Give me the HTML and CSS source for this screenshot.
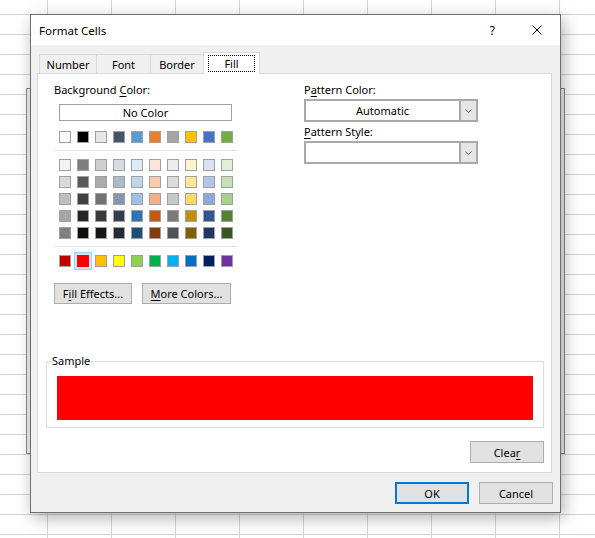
FILE: index.html
```html
<!DOCTYPE html>
<html lang="en">
<head>
<meta charset="utf-8">
<title>Format Cells</title>
<link rel="stylesheet" href="styles.css">
</head>
<body>
<div class="back-window"></div>
<div class="dialog">
  <div class="titlebar">
    <span class="title">Format Cells</span>
    <div class="title-controls">
      <span class="help">?</span>
      <svg class="close" width="10" height="10" viewBox="0 0 10 10"><path d="M0.5 0.5L9.5 9.5M9.5 0.5L0.5 9.5" stroke="#000" stroke-width="1" fill="none"/></svg>
    </div>
  </div>
  <div class="dialog-body">
    <div class="tabs">
      <div class="tab tab-number">Number</div>
      <div class="tab tab-font">Font</div>
      <div class="tab tab-border">Border</div>
      <div class="tab tab-fill active"><span class="focus">Fill</span></div>
    </div>
    <div class="panel">
      <div class="top">
        <div class="bg-col">
          <div class="label">Background <u>C</u>olor:</div>
          <div class="nocolor">No Color</div>
          <div class="swatch-row first-row">
            <span class="sw" style="background:#FFFFFF"></span><span class="sw" style="background:#000000"></span><span class="sw" style="background:#E7E6E6"></span><span class="sw" style="background:#44546A"></span><span class="sw" style="background:#5B9BD5"></span><span class="sw" style="background:#ED7D31"></span><span class="sw" style="background:#A5A5A5"></span><span class="sw" style="background:#FFC000"></span><span class="sw" style="background:#4472C4"></span><span class="sw" style="background:#70AD47"></span>
          </div>
          <div class="sep"></div>
          <div class="tints">
            <div class="swatch-row">
              <span class="sw" style="background:#F2F2F2"></span><span class="sw" style="background:#7F7F7F"></span><span class="sw" style="background:#D0CECE"></span><span class="sw" style="background:#D6DCE4"></span><span class="sw" style="background:#DDEBF7"></span><span class="sw" style="background:#FCE4D6"></span><span class="sw" style="background:#EDEDED"></span><span class="sw" style="background:#FFF2CC"></span><span class="sw" style="background:#D9E1F2"></span><span class="sw" style="background:#E2EFDA"></span>
            </div>
            <div class="swatch-row">
              <span class="sw" style="background:#D9D9D9"></span><span class="sw" style="background:#595959"></span><span class="sw" style="background:#AEAAAA"></span><span class="sw" style="background:#ACB9CA"></span><span class="sw" style="background:#BDD7EE"></span><span class="sw" style="background:#F8CBAD"></span><span class="sw" style="background:#DBDBDB"></span><span class="sw" style="background:#FFE699"></span><span class="sw" style="background:#B4C6E7"></span><span class="sw" style="background:#C6E0B4"></span>
            </div>
            <div class="swatch-row">
              <span class="sw" style="background:#BFBFBF"></span><span class="sw" style="background:#404040"></span><span class="sw" style="background:#757171"></span><span class="sw" style="background:#8497B0"></span><span class="sw" style="background:#9BC2E6"></span><span class="sw" style="background:#F4B084"></span><span class="sw" style="background:#C9C9C9"></span><span class="sw" style="background:#FFD966"></span><span class="sw" style="background:#8EA9DB"></span><span class="sw" style="background:#A9D08E"></span>
            </div>
            <div class="swatch-row">
              <span class="sw" style="background:#A6A6A6"></span><span class="sw" style="background:#262626"></span><span class="sw" style="background:#3A3838"></span><span class="sw" style="background:#333F4F"></span><span class="sw" style="background:#2F75B5"></span><span class="sw" style="background:#C65911"></span><span class="sw" style="background:#7B7B7B"></span><span class="sw" style="background:#BF8F00"></span><span class="sw" style="background:#305496"></span><span class="sw" style="background:#548235"></span>
            </div>
            <div class="swatch-row">
              <span class="sw" style="background:#808080"></span><span class="sw" style="background:#0D0D0D"></span><span class="sw" style="background:#161616"></span><span class="sw" style="background:#222B35"></span><span class="sw" style="background:#1F4E78"></span><span class="sw" style="background:#833C0C"></span><span class="sw" style="background:#525252"></span><span class="sw" style="background:#806000"></span><span class="sw" style="background:#203764"></span><span class="sw" style="background:#375623"></span>
            </div>
          </div>
          <div class="sep"></div>
          <div class="swatch-row standard-row">
            <span class="sw" style="background:#C00000"></span><span class="sw selected" style="background:#FF0000"></span><span class="sw" style="background:#FFC000"></span><span class="sw" style="background:#FFFF00"></span><span class="sw" style="background:#92D050"></span><span class="sw" style="background:#00B050"></span><span class="sw" style="background:#00B0F0"></span><span class="sw" style="background:#0070C0"></span><span class="sw" style="background:#002060"></span><span class="sw" style="background:#7030A0"></span>
          </div>
          <div class="btn-row">
            <div class="btn fill-effects">F<u>i</u>ll Effects...</div>
            <div class="btn more-colors"><u>M</u>ore Colors...</div>
          </div>
        </div>
        <div class="pat-col">
          <div class="label">P<u>a</u>ttern Color:</div>
          <div class="combo">
            <span class="combo-text">Automatic</span>
            <span class="combo-arrow"><svg width="7" height="4" viewBox="0 0 7 4"><path d="M0.5 0.5L3.5 3.5L6.5 0.5" fill="none" stroke="#606060" stroke-width="1"/></svg></span>
          </div>
          <div class="label label-second"><u>P</u>attern Style:</div>
          <div class="combo">
            <span class="combo-text"></span>
            <span class="combo-arrow"><svg width="7" height="4" viewBox="0 0 7 4"><path d="M0.5 0.5L3.5 3.5L6.5 0.5" fill="none" stroke="#606060" stroke-width="1"/></svg></span>
          </div>
        </div>
      </div>
      <fieldset class="sample">
        <legend>Sample</legend>
        <div class="sample-fill"></div>
      </fieldset>
      <div class="clear-row">
        <div class="btn clear">Clea<u>r</u></div>
      </div>
    </div>
    <div class="footer">
      <div class="btn ok">OK</div>
      <div class="btn cancel">Cancel</div>
    </div>
  </div>
</div>
</body>
</html>
```
FILE: styles.css
```css
* { box-sizing: border-box; }

html, body {
  margin: 0;
  padding: 0;
}

body {
  width: 595px;
  height: 538px;
  position: relative;
  overflow: hidden;
  font-family: "Noto Sans", sans-serif;
  font-size: 11px;
  color: #000;
  background-color: #fff;
  background-image:
    linear-gradient(to right, #d4d4d4 1px, transparent 1px),
    linear-gradient(to bottom, #d4d4d4 1px, transparent 1px);
  background-size: 64px 100%, 100% 20px;
  background-position: 47px 0, 0 14px;
}

u { text-decoration-thickness: 1px; text-underline-offset: 2px; }

.back-window {
  position: absolute;
  left: 26px;
  top: 88px;
  width: 539px;
  height: 366px;
  background: #f0f0f0;
  border: 1px solid #8c8c8c;
}

.dialog {
  position: absolute;
  left: 30px;
  top: 14px;
  width: 531px;
  height: 499px;
  background: #f0f0f0;
  border: 1px solid #6f6f6f;
  box-shadow: 3px 5px 16px rgba(0, 0, 0, 0.3);
  display: flex;
  flex-direction: column;
}

.titlebar {
  height: 30px;
  background: #fff;
  display: flex;
  align-items: center;
  justify-content: space-between;
  padding-left: 8px;
}

.title { font-size: 11.5px; }

.title-controls {
  display: flex;
  align-items: center;
}

.help { font-size: 12px; }

.close {
  display: block;
  margin-left: 37px;
  margin-right: 18px;
}

.dialog-body {
  padding: 7px 8px 8px 6px;
  display: flex;
  flex-direction: column;
}

.tabs {
  height: 21px;
  display: flex;
  align-items: flex-end;
  padding-left: 2px;
}

.tab {
  height: 19px;
  border: 1px solid #d9d9d9;
  border-bottom: none;
  margin-left: -1px;
  display: flex;
  align-items: center;
  justify-content: center;
  padding-top: 1px;
}

.tab-number { width: 58px; margin-left: 0; }
.tab-font { width: 55px; }
.tab-border { width: 54px; }

.tab-fill {
  width: 57px;
  height: 22px;
  margin-bottom: -1px;
  background: #fff;
  position: relative;
  z-index: 1;
  padding-top: 0;
}

.focus {
  width: 47px;
  height: 17px;
  border: 1px dotted #000;
  display: flex;
  align-items: center;
  justify-content: center;
}

.panel {
  height: 400px;
  background: #fff;
  border: 1px solid #d9d9d9;
  display: flex;
  flex-direction: column;
  padding: 0 7px 9px 8px;
}

.top {
  display: flex;
  padding: 8px 0 0 8px;
}

.bg-col { width: 184px; }

.label { line-height: 16px; }

.nocolor {
  margin: 6px 0 0 5px;
  width: 173px;
  height: 17px;
  border: 1px solid #a0a0a0;
  text-align: center;
  line-height: 15px;
}

.swatch-row {
  display: flex;
  gap: 6px;
  padding-left: 5px;
}

.first-row { margin-top: 10px; }

.sw {
  display: block;
  width: 12px;
  height: 12px;
  border: 1px solid #a0a0a0;
}

.sw.selected {
  border-color: #ff0000;
  box-shadow: 0 0 0 2px #cce8ff, 0 0 0 3px #99d1ff;
}

.sep {
  height: 1px;
  background: #e3e3e3;
  margin-top: 7px;
}

.tints {
  margin-top: 8px;
  display: flex;
  flex-direction: column;
  gap: 5px;
}

.standard-row { margin-top: 8px; }

.btn-row {
  display: flex;
  gap: 10px;
  margin-top: 16px;
}

.btn {
  height: 21px;
  background: #e1e1e1;
  border: 1px solid #adadad;
  display: flex;
  align-items: center;
  justify-content: center;
}

.fill-effects { width: 78px; }
.more-colors { width: 89px; }

.pat-col {
  width: 174px;
  margin-left: 66px;
}

.label-second { margin-top: 2px; }

.combo {
  margin-top: 1px;
  height: 23px;
  border: 2px solid #a9a9a9;
  display: flex;
}

.combo-text {
  flex: 1;
  display: flex;
  align-items: center;
  justify-content: center;
}

.combo-arrow {
  width: 17px;
  background: #e6e6e6;
  border-left: 2px solid #a9a9a9;
  display: flex;
  align-items: center;
  justify-content: center;
}

.combo-arrow svg { display: block; }

.sample {
  margin: auto 0 0 0;
  padding: 7px 10px;
  border: 1px solid #dcdcdc;
  min-inline-size: 0;
}

.sample legend {
  padding: 0 1px;
  margin-left: -6px;
  line-height: 16px;
}

.sample-fill {
  height: 44px;
  background: #ff0000;
}

.clear-row {
  display: flex;
  justify-content: flex-end;
  margin-top: 13px;
}

.clear { width: 74px; height: 22px; }

.footer {
  display: flex;
  justify-content: flex-end;
  gap: 10px;
  margin-top: 9px;
  margin-right: -1px;
}

.ok, .cancel { width: 74px; height: 22px; }

.ok { border: 2px solid #0078d7; }
```
